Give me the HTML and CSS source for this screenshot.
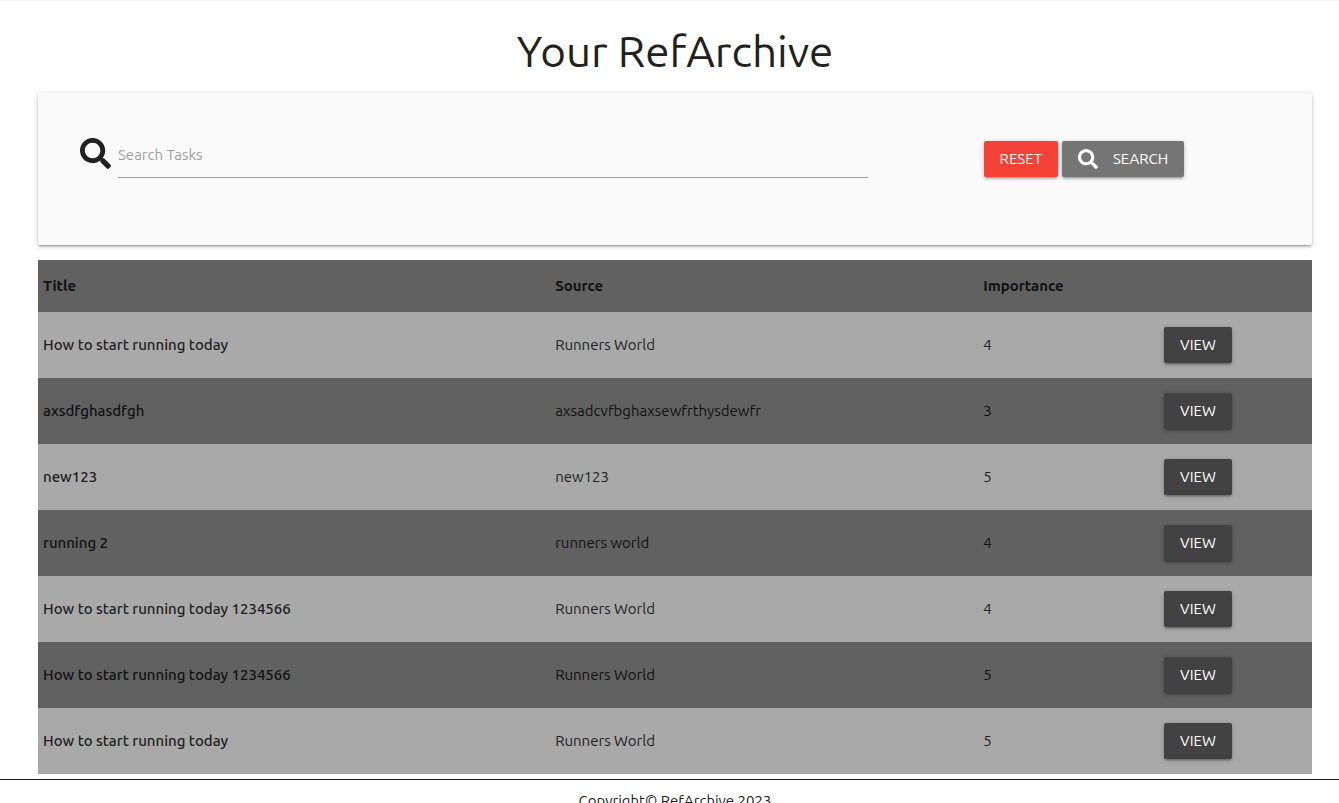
FILE: index.html
```html
<!DOCTYPE html>
<html lang="en">
<head>
<meta charset="utf-8">
<title>Your RefArchive</title>
<link rel="stylesheet" href="styles.css">
</head>
<body>
<svg class="sprite" aria-hidden="true">
  <symbol id="search" viewBox="0 0 512 512"><path d="M505 442.7L405.3 343c-4.5-4.5-10.6-7-17-7H372c27.600-35.300 44-79.700 44-128C416 93.100 322.900 0 208 0S0 93.100 0 208s93.100 208 208 208c48.300 0 92.700-16.400 128-44v16.300c0 6.400 2.500 12.500 7 17l99.700 99.700c9.400 9.400 24.600 9.400 33.900 0l28.300-28.300c9.400-9.400 9.400-24.600.1-34zM208 336c-70.700 0-128-57.200-128-128 0-70.700 57.200-128 128-128 70.700 0 128 57.200 128 128 0 70.700-57.200 128-128 128z"/></symbol>
</svg>
<main class="page">
  <h1 class="title">Your RefArchive</h1>
  <form class="card">
    <div class="field">
      <label for="query"><svg class="field-icon" role="img" aria-label="Search tasks"><use href="#search"/></svg></label>
      <input class="field-input" id="query" type="text" placeholder="Search Tasks">
    </div>
    <div class="actions">
      <button class="btn btn-reset" type="reset">RESET</button>
      <button class="btn btn-search" type="submit"><svg class="btn-icon" aria-hidden="true"><use href="#search"/></svg>SEARCH</button>
    </div>
  </form>
  <table class="archive">
    <thead>
      <tr><th class="col-title">Title</th><th class="col-source">Source</th><th class="col-importance">Importance</th><th class="col-view"></th></tr>
    </thead>
    <tbody>
      <tr><td class="name">How to start running today</td><td>Runners World</td><td>4</td><td><button class="btn btn-view" type="button">VIEW</button></td></tr>
      <tr><td class="name">axsdfghasdfgh</td><td>axsadcvfbghaxsewfrthysdewfr</td><td>3</td><td><button class="btn btn-view" type="button">VIEW</button></td></tr>
      <tr><td class="name">new123</td><td>new123</td><td>5</td><td><button class="btn btn-view" type="button">VIEW</button></td></tr>
      <tr><td class="name">running 2</td><td>runners world</td><td>4</td><td><button class="btn btn-view" type="button">VIEW</button></td></tr>
      <tr><td class="name">How to start running today 1234566</td><td>Runners World</td><td>4</td><td><button class="btn btn-view" type="button">VIEW</button></td></tr>
      <tr><td class="name">How to start running today 1234566</td><td>Runners World</td><td>5</td><td><button class="btn btn-view" type="button">VIEW</button></td></tr>
      <tr><td class="name">How to start running today</td><td>Runners World</td><td>5</td><td><button class="btn btn-view" type="button">VIEW</button></td></tr>
    </tbody>
  </table>
</main>
<footer class="footer">Copyright© RefArchive 2023</footer>
</body>
</html>
```
FILE: styles.css
```css
* { box-sizing: border-box; }

body {
  margin: 0;
  border-top: 1px solid #f3f3f3;
  background: #fff;
  color: #212121;
  font: 15px/22px Ubuntu, "Noto Sans", sans-serif;
}

.sprite { display: none; }

.page { padding: 25px 27px 5px 38px; }

.title {
  margin: 0 0 17px;
  font-size: 44px;
  font-weight: 400;
  line-height: 50px;
  text-align: center;
}

.card {
  display: grid;
  grid-template-columns: 11fr 4fr;
  column-gap: 116px;
  align-items: start;
  min-height: 152px;
  margin-bottom: 15px;
  padding: 40px 42px;
  border-radius: 2px;
  background: #fafafa;
  box-shadow: 0 2px 2px 0 rgba(0, 0, 0, .14), 0 3px 1px -2px rgba(0, 0, 0, .12), 0 1px 5px 0 rgba(0, 0, 0, .2);
}

.field { display: flex; gap: 7px; }

.field-icon {
  display: block;
  width: 31px;
  height: 31px;
  margin-top: 5px;
  fill: #212121;
}

.field-input {
  flex: 1;
  min-width: 0;
  height: 45px;
  padding: 0 0 2px;
  border: 0;
  border-bottom: 1px solid #9e9e9e;
  outline: 0;
  background: transparent;
  color: inherit;
  font: inherit;
}

.field-input::placeholder { color: #9e9e9e; }

.actions {
  display: flex;
  gap: 4px;
  padding-top: 8px;
}

.btn {
  display: inline-flex;
  align-items: center;
  height: 36px;
  padding: 0 16px;
  border: 0;
  border-radius: 2px;
  color: #fff;
  font: inherit;
  box-shadow: 0 2px 2px 0 rgba(0, 0, 0, .14), 0 3px 1px -2px rgba(0, 0, 0, .12), 0 1px 5px 0 rgba(0, 0, 0, .2);
  cursor: pointer;
}

.btn-reset { background: #f44336; }
.btn-search { gap: 15px; background: #757575; }
.btn-view { background: #424242; }

.btn-icon {
  width: 20px;
  height: 20px;
  fill: #fff;
}

.archive {
  width: 100%;
  border-collapse: collapse;
  table-layout: fixed;
}

.archive tr { background: #616161; }
.archive tbody tr:nth-child(odd) { background: #a9a9a9; }

.archive th,
.archive td {
  padding: 15px 5px;
  text-align: left;
  vertical-align: middle;
}

.archive th { color: #111; font-weight: 700; }
.archive tbody tr:nth-child(even) { color: #111; }
.archive .btn { vertical-align: top; }

.col-title { width: 40.2%; }
.col-source { width: 33.6%; }
.col-importance { width: 14.2%; }
.col-view { width: 12%; }

.name { font-weight: 500; }

.footer {
  padding: 10px 0 10px 11px;
  border-top: 1px solid #212121;
  text-align: center;
}
```
